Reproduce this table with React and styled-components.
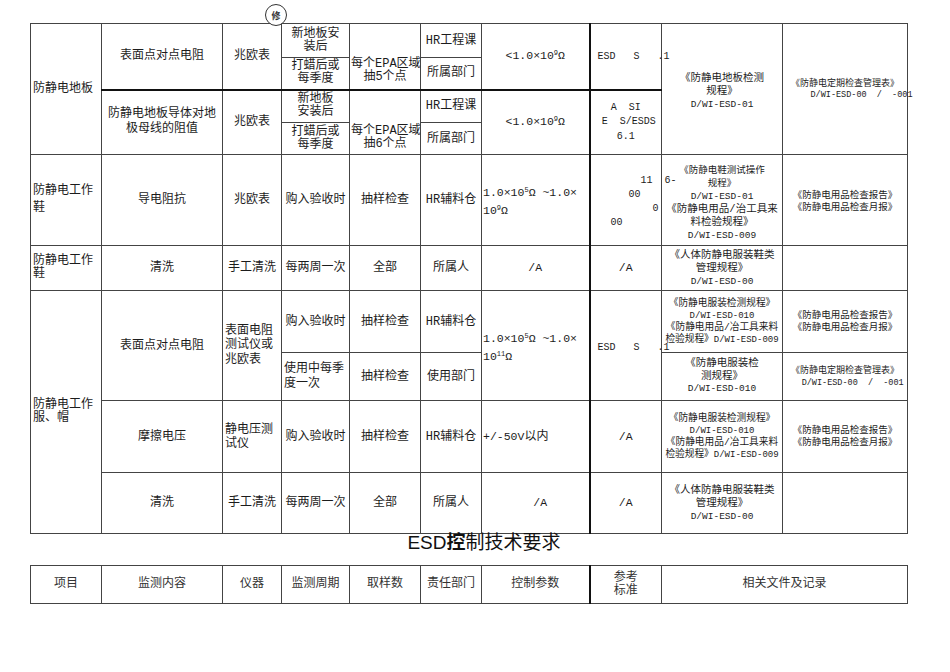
import React from 'react';
import styled, {createGlobalStyle} from 'styled-components';

const GlobalStyle = createGlobalStyle`
  html, body {
    margin: 0;
    padding: 0;
    background: #fff;
  }
  body {
    font-family: "Liberation Mono", "Noto Sans CJK SC", monospace;
    color: #1c1c1c;
  }
`;

const Page = styled.div`
  position: relative;
  width: 950px;
  padding: 23px 0 0 30px;
  box-sizing: border-box;
`;

const Stamp = styled.div`
  position: absolute;
  left: 265px;
  top: 4px;
  width: 22px;
  height: 22px;
  box-sizing: border-box;
  border: 1.5px solid #333;
  border-radius: 50%;
  background: #fff;
  z-index: 2;
  display: flex;
  justify-content: center;
  padding-top: 6px;
  font: 700 9px/1 "Noto Sans CJK SC", sans-serif;
  color: #333;
`;

const Sheet = styled.table`
  border-collapse: collapse;
  table-layout: fixed;
  width: 877px;
`;

const Row = styled.tr`
  height: ${p => p.$h}px;
`;

const Cell = styled.td`
  border: 1px solid #444;
  border-left: ${p => (p.$thick ? '2px solid #111' : '1px solid #444')};
  border-top: ${p => (p.$thickTop ? '2px solid #111' : '1px solid #444')};
  padding: ${p => p.$pad || '0 2px'};
  text-align: ${p => p.$align || 'center'};
  vertical-align: ${p => p.$valign || 'middle'};
  font-size: ${p => p.$size || 12}px;
  line-height: ${p => p.$lh || 14}px;
  white-space: ${p => (p.$pre ? 'pre' : 'nowrap')};
  overflow: visible;
`;

const Code = styled.span`
  font-size: ${p => p.$size || 9.5}px;
  white-space: pre;
`;

const Small = styled.span`
  font-size: 9.5px;
`;

const Value = styled.span`
  font-size: 11.5px;
`;

const Sup = styled.sup`
  font-size: 7px;
  vertical-align: 4px;
  line-height: 0;
`;

const Title = styled.h1`
  margin: 0;
  width: 846px;
  height: 31px;
  padding-left: 31px;
  text-align: center;
  font: 400 19px/17px "Liberation Sans", "Noto Sans CJK SC", sans-serif;
  color: #111;
`;

const Strong = styled.span`
  font-weight: 700;
`;

const HeadCell = styled(Cell)`
  color: #333;
  font-size: 12px;
  line-height: 13px;
`;

const WIDTHS = [71, 121, 59, 68, 71, 61, 108, 72, 121, 125];

const Cols = () => (
  <colgroup>
    {WIDTHS.map((w, i) => (
      <col key={i} style={{width: w}} />
    ))}
  </colgroup>
);

const Ohm = ({exp}) => (
  <Value>
    &lt;1.0×10<Sup>{exp}</Sup>Ω
  </Value>
);

const Range = ({exp}) => (
  <Value>
    1.0×10<Sup>5</Sup>Ω ~1.0×
    <br />
    10<Sup>{exp}</Sup>Ω
  </Value>
);

const EsdRef = () => <Code $size={10}>{'ESD   S   .1'}</Code>;

const Reports = () => (
  <>
    《防静电用品检查报告》
    <br />
    《防静电用品检查月报》
  </>
);

const ClothDocs = () => (
  <>
    《防静电服装检测规程》
    <br />
    <Code $size={9}>D/WI-ESD-010</Code>
    <br />
    《防静电用品/冶工具来料
    <br />
    检验规程》<Code $size={9}>D/WI-ESD-009</Code>
  </>
);

const BodyDocs = () => (
  <>
    《人体防静电服装鞋类
    <br />
    管理规程》
    <br />
    <Code>D/WI-ESD-00</Code>
  </>
);

export default function App() {
  return (
    <Page>
      <GlobalStyle />
      <Stamp>修</Stamp>
      <Sheet>
        <Cols />
        <tbody>
          <Row $h={34}>
            <Cell rowSpan={4} $align="left">防静电地板</Cell>
            <Cell rowSpan={2}>表面点对点电阻</Cell>
            <Cell rowSpan={2}>兆欧表</Cell>
            <Cell $lh={13}>新地板安<br />装后</Cell>
            <Cell rowSpan={2} $valign="bottom" $pad="0 1px 5px" $lh={13}>
              每个EPA区域<br />抽5个点
            </Cell>
            <Cell>HR工程课</Cell>
            <Cell rowSpan={2}><Ohm exp={9} /></Cell>
            <Cell rowSpan={2} $thick $align="left" $pad="0 0 0 7px"><EsdRef /></Cell>
            <Cell rowSpan={4} $size={10.5} $lh={13} $pad="4px 2px 0">
              《防静电地板检测<br />规程》<br /><Code>D/WI-ESD-01</Code>
            </Cell>
            <Cell rowSpan={4} $size={9} $lh={11} $pad="2px 2px 0">
              《防静电定期检查管理表》<br />
              <Code $size={8.5}>{'     D/WI-ESD-00  /  -001'}</Code>
            </Cell>
          </Row>
          <Row $h={32}>
            <Cell $lh={13}>打蜡后或<br />每季度</Cell>
            <Cell>所属部门</Cell>
          </Row>
          <Row $h={33}>
            <Cell rowSpan={2} $thickTop $lh={15}>防静电地板导体对地<br />极母线的阻值</Cell>
            <Cell rowSpan={2} $thickTop>兆欧表</Cell>
            <Cell $thickTop $lh={13}>新地板<br />安装后</Cell>
            <Cell rowSpan={2} $thickTop $valign="bottom" $pad="0 1px 3px" $lh={13}>
              每个EPA区域<br />抽6个点
            </Cell>
            <Cell $thickTop>HR工程课</Cell>
            <Cell rowSpan={2} $thickTop><Ohm exp={9} /></Cell>
            <Cell rowSpan={2} $thickTop $thick $pre $size={10} $lh={14.5}>
              {'A  SI\n E  S/ESDS\n6.1'}
            </Cell>
          </Row>
          <Row $h={32}>
            <Cell $lh={13}>打蜡后或<br />每季度</Cell>
            <Cell>所属部门</Cell>
          </Row>

          <Row $h={91}>
            <Cell $align="left" $lh={17}>防静电工作<br />鞋</Cell>
            <Cell>导电阻抗</Cell>
            <Cell>兆欧表</Cell>
            <Cell>购入验收时</Cell>
            <Cell>抽样检查</Cell>
            <Cell>HR辅料仓</Cell>
            <Cell $align="left" $lh={17} $pad="4px 1px 0"><Range exp={9} /></Cell>
            <Cell $thick $align="left" $pre $size={10} $lh={14} $pad="4px 0 0 2px">
              {'        11  6-\n      00\n          0\n   00'}
            </Cell>
            <Cell $size={10.5} $lh={13} $pad="5px 2px 0">
              <Small>《防静电鞋测试操作</Small>
              <br />
              <Small>规程》</Small>
              <br />
              <Code>D/WI-ESD-01</Code>
              <br />
              《防静电用品/治工具来
              <br />
              料检验规程》
              <br />
              <Code>D/WI-ESD-009</Code>
            </Cell>
            <Cell $size={9.5} $lh={12} $pad="4px 2px 0"><Reports /></Cell>
          </Row>

          <Row $h={45}>
            <Cell $align="left" $lh={13}>防静电工作<br />鞋</Cell>
            <Cell>清洗</Cell>
            <Cell>手工清洗</Cell>
            <Cell>每两周一次</Cell>
            <Cell>全部</Cell>
            <Cell>所属人</Cell>
            <Cell><Value>/A</Value></Cell>
            <Cell $thick><Value>/A</Value></Cell>
            <Cell $size={10.5} $lh={13} $pad="1px 2px 0"><BodyDocs /></Cell>
            <Cell />
          </Row>

          <Row $h={62}>
            <Cell rowSpan={4} $align="left" $lh={13}>防静电工作<br />服、帽</Cell>
            <Cell rowSpan={2}>表面点对点电阻</Cell>
            <Cell rowSpan={2} $align="left" $lh={14.5}>表面电阻<br />测试仪或<br />兆欧表</Cell>
            <Cell>购入验收时</Cell>
            <Cell>抽样检查</Cell>
            <Cell>HR辅料仓</Cell>
            <Cell rowSpan={2} $align="left" $lh={17} $pad="4px 1px 0"><Range exp={11} /></Cell>
            <Cell rowSpan={2} $thick $align="left" $pad="4px 0 0 7px"><EsdRef /></Cell>
            <Cell $size={9.7} $lh={12}><ClothDocs /></Cell>
            <Cell $size={9.5} $lh={12}><Reports /></Cell>
          </Row>
          <Row $h={48}>
            <Cell $align="left" $lh={15}>使用中每季<br />度一次</Cell>
            <Cell>抽样检查</Cell>
            <Cell>使用部门</Cell>
            <Cell $size={10.5} $lh={12.5} $pad="0 2px">
              《防静电服装检<br />测规程》<br /><Code>D/WI-ESD-010</Code>
            </Cell>
            <Cell $size={9} $lh={12}>
              《防静电定期检查管理表》<br />
              <Code $size={8.5}>{'   D/WI-ESD-00  /  -001'}</Code>
            </Cell>
          </Row>

          <Row $h={72}>
            <Cell>摩擦电压</Cell>
            <Cell $align="left" $lh={14}>静电压测<br />试仪</Cell>
            <Cell>购入验收时</Cell>
            <Cell>抽样检查</Cell>
            <Cell>HR辅料仓</Cell>
            <Cell $align="left" $pad="0 1px"><Value>+/-50V</Value>以内</Cell>
            <Cell $thick><Value>/A</Value></Cell>
            <Cell $size={9.7} $lh={12}><ClothDocs /></Cell>
            <Cell $size={9.5} $lh={12}><Reports /></Cell>
          </Row>

          <Row $h={61}>
            <Cell>清洗</Cell>
            <Cell>手工清洗</Cell>
            <Cell>每两周一次</Cell>
            <Cell>全部</Cell>
            <Cell>所属人</Cell>
            <Cell $pad="0 0 0 10px"><Value>/A</Value></Cell>
            <Cell $thick><Value>/A</Value></Cell>
            <Cell $size={10.5} $lh={13}><BodyDocs /></Cell>
            <Cell />
          </Row>
        </tbody>
      </Sheet>

      <Title>
        ESD<Strong>控</Strong>制技术要求
      </Title>

      <Sheet>
        <Cols />
        <tbody>
          <Row $h={38}>
            <HeadCell>项目</HeadCell>
            <HeadCell>监测内容</HeadCell>
            <HeadCell>仪器</HeadCell>
            <HeadCell>监测周期</HeadCell>
            <HeadCell>取样数</HeadCell>
            <HeadCell>责任部门</HeadCell>
            <HeadCell>控制参数</HeadCell>
            <HeadCell $thick>参考<br />标准</HeadCell>
            <HeadCell colSpan={2}>相关文件及记录</HeadCell>
          </Row>
        </tbody>
      </Sheet>
    </Page>
  );
}
